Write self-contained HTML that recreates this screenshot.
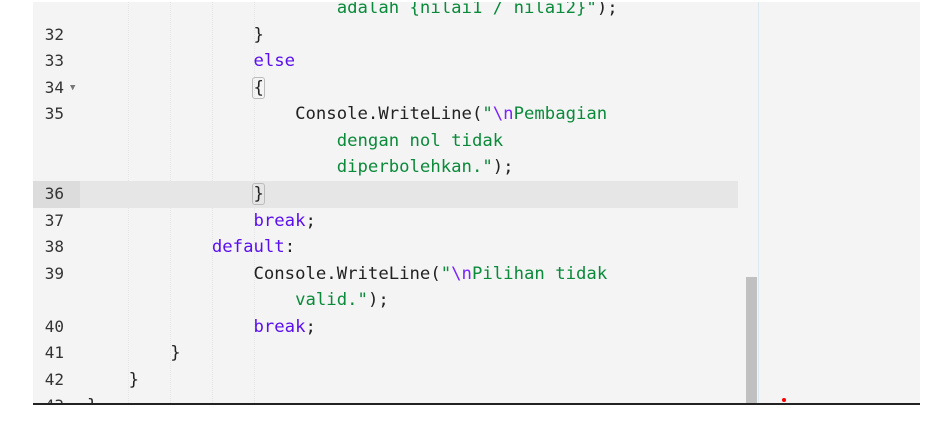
<!DOCTYPE html>
<html><head><style>
body{margin:0;width:937px;height:426px;background:#fff;overflow:hidden;position:relative;font-family:"DejaVu Sans Mono","Liberation Mono",monospace}
#ed{position:absolute;left:33px;top:2px;width:887px;height:401px;background:#f4f4f4;overflow:hidden;border-bottom:2px solid #222;box-sizing:content-box}
.row{position:absolute;left:0;height:26.5px;line-height:26.5px;font-size:17.3px;white-space:pre;color:#222;width:705px}
.ln{position:absolute;left:0;width:31px;text-align:right;color:#333;font-size:16px}
.code{position:absolute;left:54px}
.k{color:#5a0ff0}.s{color:#0a8a3a}.e{color:#7a22ff}
.g{position:absolute;top:0;width:0;border-left:1px dotted #e6e6e6;height:401px}
.hl{position:absolute;left:47px;top:179px;width:658px;height:26.5px;background:#e6e6e6}
.hlg{position:absolute;left:0;top:179px;width:47px;height:26.5px;background:#dcdcdc}
.br{outline:1px solid #bbb;border-radius:2px}
</style></head><body>
<div id="ed">
<div class="hl"></div><div class="hlg"></div>
<div class="g" style="left:95px"></div><div class="g" style="left:137px"></div><div class="g" style="left:179px"></div><div class="g" style="left:221px"></div>
<div class="row" style="top:-7px"><span class="code">                        <span class="s">adalah {nilai1 / nilai2}"</span>);</span></div>
<div class="row" style="top:19.5px"><span class="ln">32</span><span class="code">                }</span></div>
<div class="row" style="top:46px"><span class="ln">33</span><span class="code">                <span class="k">else</span></span></div>
<div class="row" style="top:72.5px"><span class="ln">34<span style="position:absolute;left:37px;top:0;font-size:9px;color:#777">▼</span></span><span class="code">                <span class="br">{</span></span></div>
<div class="row" style="top:99px"><span class="ln">35</span><span class="code">                    Console.WriteLine(<span class="s">"</span><span class="e">\n</span><span class="s">Pembagian</span></span></div>
<div class="row" style="top:125.5px"><span class="code">                        <span class="s">dengan nol tidak</span></span></div>
<div class="row" style="top:152px"><span class="code">                        <span class="s">diperbolehkan."</span>);</span></div>
<div class="row" style="top:179px"><span class="ln">36</span><span class="code">                <span class="br">}</span></span></div>
<div class="row" style="top:205.5px"><span class="ln">37</span><span class="code">                <span class="k">break</span>;</span></div>
<div class="row" style="top:232px"><span class="ln">38</span><span class="code">            <span class="k">default</span>:</span></div>
<div class="row" style="top:258.5px"><span class="ln">39</span><span class="code">                Console.WriteLine(<span class="s">"</span><span class="e">\n</span><span class="s">Pilihan tidak</span></span></div>
<div class="row" style="top:285px"><span class="code">                    <span class="s">valid."</span>);</span></div>
<div class="row" style="top:311.5px"><span class="ln">40</span><span class="code">                <span class="k">break</span>;</span></div>
<div class="row" style="top:338px"><span class="ln">41</span><span class="code">        }</span></div>
<div class="row" style="top:364.5px"><span class="ln">42</span><span class="code">    }</span></div>
<div class="row" style="top:391px"><span class="ln">43</span><span class="code">}</span></div>
<div style="position:absolute;left:713px;top:275px;width:11px;height:126px;background:#c0c0c0"></div>
<div style="position:absolute;left:725px;top:0;width:1px;height:401px;background:#dbe8ee"></div>
<div style="position:absolute;left:749px;top:396px;width:4px;height:4px;border-radius:50%;background:#f00"></div>
</div>
</body></html>
